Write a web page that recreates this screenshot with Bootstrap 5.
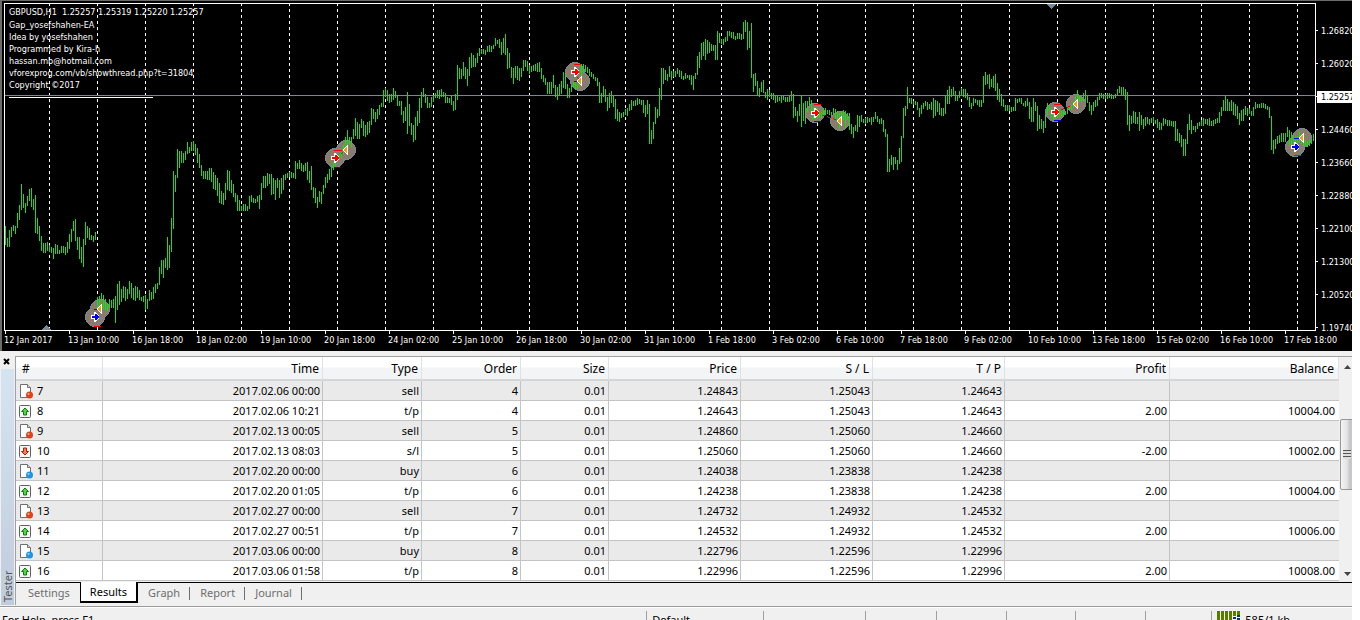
<!DOCTYPE html>
<html lang="en">
<head>
<meta charset="utf-8">
<meta name="viewport" content="width=device-width, initial-scale=1">
<title>Strategy Tester</title>
<link href="https://cdn.jsdelivr.net/npm/bootstrap@5.3.0/dist/css/bootstrap.min.css" rel="stylesheet">
<style>
  body { font-family: "Noto Sans", "Open Sans", sans-serif; font-size: 11px; line-height: 20px; color: #000; background: #fff; }
  .terminal { margin-right: 8px; min-height: 100vh; background: #f0f0f0; }

  .chart-pane { background: #000; border-left: 2px solid #6b6b68; border-top: 1px solid #6b6b68; padding: 2px 0 5px 2px; color: #fff; font-family: "DejaVu Sans Condensed", "Noto Sans", sans-serif; font-size: 9px; line-height: 12px; }
  .plot-area { border: 1px solid #fff; height: 328px; }
  .plot-area svg { display: block; width: 100%; height: 326px; }
  .chart-note { top: 2px; left: 4px; white-space: pre; }
  .chart-note .symbol-line { margin-bottom: 1px; }
  .note-rule { width: 144px; border-top: 1px solid #fff; margin-top: 6px; }
  .price-axis { width: 36px; height: 328px; padding-top: 11px; }
  .price-tick { height: 33px; white-space: nowrap; }
  .price-tick::before { content: ""; width: 2px; height: 1px; background: #fff; margin-right: 3px; flex: none; }
  .price-tick.current span { background: #fff; color: #000; margin-left: -4px; padding: 0 0 0 4px; }
  .time-axis { display: grid; grid-template-columns: repeat(20, 64fr) 32fr; margin-right: 36px; }
  .time-axis span { white-space: nowrap; min-width: 0; }
  .time-axis span::before { content: ""; display: block; width: 1px; height: 3px; background: #fff; margin-left: 1px; }

  .tester { margin-top: 5px; }
  .dock-strip { width: 15px; }
  .dock-strip button { border: 0; background: none; width: 13px; height: 13px; padding: 2px 0 0 3px; line-height: 1; }
  .dock-strip svg { display: block; }
  .dock-title { writing-mode: vertical-rl; transform: rotate(180deg); width: 13px; margin-left: 1px; background: linear-gradient(0deg, #d6e4f2, #c0ccdb); color: #555; line-height: 13px; padding-top: 3px; }
  .grid-pane { border-left: 1px solid #a0a0a0; border-top: 1px solid #a0a0a0; min-width: 0; }
  .results { table-layout: fixed; width: 100%; border-collapse: separate; border-spacing: 0; background: #fff; }
  .results th { height: 24px; padding: 2px 3px 0; line-height: 20px; font-weight: 400; font-size: 12px; text-align: right; border-right: 1px solid #dfe1e4; border-bottom: 2px solid #d5d5d5; background: linear-gradient(#fff 45%, #f2f4f6 50%, #f2f4f6); }
  .results td { height: 20px; padding: 0 2px; line-height: 19px; text-align: right; border-right: 1px solid #c4c4c4; border-bottom: 1px solid #c4c4c4; white-space: nowrap; }
  .results tr > :first-child { text-align: left; }
  .results th:first-child { padding-left: 6px; }
  .results td:first-child { padding-left: 3px; }
  .results td:last-child { border-right: 0; padding-right: 4px; }
  .results th:last-child { padding-right: 4px; }
  .results tbody tr:nth-child(odd) td { background: #eaeaea; }
  .results td svg { width: 15px; height: 16px; margin: -2px 3px 0 0; }
  .scroll-rail { width: 13px; background: #f0f0f0; overflow: hidden; }
  .scroll-rail button { border: 0; background: none; padding: 0; width: 17px; height: 17px; line-height: 1; display: block; }
  .rail-space { height: 45px; }
  .scroll-thumb { width: 17px; height: 71px; margin-left: 1px; border: 1px solid #979797; border-radius: 2px; background: linear-gradient(90deg, #f4f4f4, #e3e3e3 40%, #c4c4c8 60%, #d6d6d8); }
  .scroll-thumb i { display: block; width: 8px; height: 9px; margin-left: 2px; background: repeating-linear-gradient(#555 0 1px, #ddd 1px 3px); }

  .tab-strip { border-top: 1px solid #000; margin-top: 1px; height: 23px; }
  .tab-strip button { border: 0; background: none; padding: 0 10px; color: #6e6e6e; line-height: 18px; height: 19px; position: relative; }
  .tab-strip button:first-child { padding-left: 12px; }
  .tab-strip button.current { background: #fff; color: #000; border: solid #000; border-width: 0 2px 2px 1px; margin-top: -1px; height: 21px; padding: 0 9px; }
  .tab-strip button.ruled::after { content: ""; position: absolute; right: 0; top: 4px; height: 13px; width: 1px; background: #6e6e6e; }

  .status-bar { border-top: 1px solid #9a9a9a; box-shadow: inset 0 1px #fff; margin-top: 1px; height: 14px; padding-top: 4px; overflow: hidden; line-height: 18px; }
  .status-bar > div { border-left: 1px solid #a0a0a0; height: 20px; flex: none; white-space: nowrap; padding-left: 5px; }
  .status-bar > .hint { border: 0; padding-left: 2px; }
  .w-hint { width: 47.8%; } .w-profile { width: 8.6%; } .w-a { width: 7.6%; } .w-b { width: 5.2%; } .w-c { width: 5.1%; } .w-d { width: 4.9%; }
</style>
</head>
<body>
<main class="terminal d-flex flex-column">
  <section class="chart-pane overflow-hidden" aria-label="GBPUSD chart">
    <div class="d-flex">
      <div class="plot-area flex-grow-1 position-relative">
        <svg viewBox="5 4 1310 326" preserveAspectRatio="none" shape-rendering="crispEdges" role="img" aria-label="Price bars">
          <defs>
            <g id="arrow-in">
              <path d="M-4-2h3v-3h1l4 4v2l-4 4h-1v-3h-3z" fill="#fff"/>
              <path d="M-3-1h3v-2h1l3 3-3 3h-1v-2h-3z" fill="currentColor"/>
            </g>
            <g id="arrow-out">
              <path d="M2-5v10h-1l-5-5 5-5z" fill="#fff"/>
              <path d="M1-4v8l-4-4z" fill="#daa520"/>
            </g>
          </defs>
          <path id="day-lines" stroke="#fff" stroke-dasharray="3 3" fill="none"/>
          <path d="M5 95.500H1315" stroke="#778899"/>
          <g id="halos" fill="#8b7b6b" stroke="#778899"></g>
          <path id="bars" stroke="#14e014" fill="none"/>
          <g stroke="#f00">
            <path d="M94 326.500h7M334 150.500h8M574 64.500h7M814 104.500h7M1054 104.500h7M1294 155.500h7"/>
            <path d="M336 158L346 150M575 72L579 80M816 113L840 121M1056 112L1075 104" stroke-dasharray="3 3"/>
          </g>
          <path d="M94 309.500h6M334 167.500h7M574 81.500h7M814 121.500h7M1054 120.500h7M1294 138.500h7" stroke="#00f"/>
          <g id="signals"></g>
          <path d="M41 330l5-5 5 5zM1046 4l5 5 5-5z" fill="#778899"/>
        </svg>
        <div class="chart-note position-absolute"><div class="symbol-line">GBPUSD,H1  1.25257 1.25319 1.25220 1.25257</div><div>Gap_yosefshahen-EA</div><div>Idea by yosefshahen</div><div>Programmed by Kira-h</div><div>hassan.mb@hotmail.com</div><div>vforexprog.com/vb/showthread.php?t=31804</div><div>Copyright ©2017</div><div class="note-rule"></div></div>
      </div>
      <div class="price-axis flex-shrink-0" id="price-axis"></div>
    </div>
    <div class="time-axis" id="time-axis"></div>
  </section>

  <section class="tester d-flex" aria-label="Tester">
    <div class="dock-strip d-flex flex-column flex-shrink-0">
      <button type="button" class="d-flex" aria-label="Close"><svg width="7" height="7" viewBox="0 0 7 7"><path d="M1 1l5 5M6 1L1 6" stroke="#000" stroke-width="2"/></svg></button>
      <div class="dock-title flex-grow-1">Tester</div>
    </div>
    <div class="grid-pane flex-grow-1">
      <div class="d-flex">
        <table class="results">
          <colgroup><col style="width:87px"><col style="width:220px"><col style="width:99px"><col style="width:99px"><col style="width:88px"><col style="width:132px"><col style="width:132px"><col style="width:132px"><col style="width:165px"><col style="width:169px"></colgroup>
          <thead><tr><th>#</th><th>Time</th><th>Type</th><th>Order</th><th>Size</th><th>Price</th><th>S / L</th><th>T / P</th><th>Profit</th><th>Balance</th></tr></thead>
          <tbody id="rows"></tbody>
        </table>
        <div class="scroll-rail flex-shrink-0 d-flex flex-column">
          <button type="button" aria-label="Scroll up"><svg width="7" height="4" viewBox="0 0 7 4"><path d="M0 4l3.500-4L7 4z" fill="#444"/></svg></button>
          <div class="rail-space"></div>
          <div class="scroll-thumb d-flex align-items-center flex-shrink-0"><i></i></div>
          <button type="button" class="mt-auto" aria-label="Scroll down"><svg width="7" height="4" viewBox="0 0 7 4"><path d="M0 0l3.500 4L7 0z" fill="#444"/></svg></button>
        </div>
      </div>
      <nav class="tab-strip d-flex">
        <button type="button">Settings</button><button type="button" class="current">Results</button><button type="button" class="ruled">Graph</button><button type="button" class="ruled">Report</button><button type="button" class="ruled">Journal</button>
      </nav>
    </div>
  </section>

  <footer class="status-bar d-flex">
    <div class="hint w-hint">For Help, press F1</div>
    <div class="w-profile">Default</div>
    <div class="w-a"></div><div class="w-b"></div><div class="w-b"></div><div class="w-c"></div><div class="w-b"></div><div class="w-d"></div>
    <div class="d-flex"><svg width="24" height="14" viewBox="0 0 24 14" shape-rendering="crispEdges"><path d="M1 0v14M5 0v14M9 0v14M13 0v14M17 0v5M21 0v5" stroke="#5a7a00" stroke-width="3"/><path d="M17 6v8M21 4v10" stroke="#0a3a5a" stroke-width="3" stroke-dasharray="2 1"/></svg><span class="ms-1">585/1 kb</span></div>
  </footer>
</main>

<script src="https://cdn.jsdelivr.net/npm/bootstrap@5.3.0/dist/js/bootstrap.bundle.min.js"></script>
<script>
  // High,low of every hourly bar; bars are two units apart.
  const bars = `226,245 238,247 230,247 227,237 225,231 226,234 213,228 205,220 184,210 194,208 203,213 196,206 189,201 188,207 199,210 195,233 218,234 226,241 236,251 243,253 243,253 242,251 245,252 247,253 248,259 244,254 245,254 250,254 246,253 246,253 247,255 242,253 234,249 229,242 221,231 219,241 237,250 237,259 247,263 239,267 222,245 226,238 228,240 235,240 236,242 232,240
297,309 296,307 293,301 295,309 299,310 303,311 299,308 300,308 299,308 296,323 284,310 281,305 289,302 286,298 287,301 289,299 281,294 283,298 288,300 286,301 287,298 290,300 297,301 296,302 295,310 299,309 290,301 292,300 287,299 284,293 283,289 267,285 260,274 260,278 258,268 237,270 245,268 218,252 171,229 175,192
149,178 151,168 151,163 153,163 151,160 142,154 147,153 142,151 141,151 144,155 148,163 154,168 165,176 171,179 171,179 171,180 168,180 168,182 172,189 175,190 178,196 183,203 191,204 193,205 183,200 170,190 171,191 180,193 184,197 193,202 195,211 200,211 206,211 204,211 204,211 206,211 196,209 195,202 198,203 199,203 196,202 195,209 183,200 176,188 176,188 173,186 174,184 174,195 178,194 180,200 178,188 180,198 178,194 175,190 174,180 173,178 172,177 172,178 173,178
161,179 163,169 160,169 163,171 165,172 163,171 162,180 171,183 166,190 187,198 188,203 197,208 191,202 192,204 185,194 177,188 174,183 169,180 165,177 162,170 160,167 157,162 154,160 152,158 145,154 137,150 130,145 137,144 137,147 129,139 118,136 122,139 124,139 119,128 121,136 125,137 122,135 121,133 108,125 109,119 112,122 109,119 105,115 103,107
90,107 88,97 90,101 94,103 94,102 88,100 91,98 95,106 101,106 101,115 111,123 107,121 92,134 104,126 123,135 125,142 117,140 111,126 98,123 92,108 88,97 94,103 97,108 103,108 97,107 95,102 93,98 90,98 90,99 89,97 92,97 93,103 97,103 98,103 96,105 101,111 94,110 65,100 68,79 69,79 62,76 67,79 69,86 57,76 53,68 55,67 58,67 53,63 48,56 49,54 49,54 50,55 46,52 45,52 46,52 45,49 38,46 40,44 39,48 42,55 38,53 34,55 48,69 53,68
67,78 68,84 66,78 66,80 68,81 68,77 60,71 60,67 61,71 65,74 66,72 65,71 64,71 63,72 62,72 68,79 75,82 78,85 82,94 82,94 82,94 75,88 85,97 87,100 84,96 81,94 72,88 73,89 84,98 88,98 85,92 82,87 82,89 84,89 82,87 64,83 64,73 65,72 67,73 69,76 72,77 74,79 77,81 78,86 82,103 93,103 86,97 89,102 97,111 93,108 91,103 96,107 99,119 109,121 112,122 113,118 112,117 109,115 108,116 104,111 100,110 101,106 100,106 98,105 99,104 100,105 100,113 105,117 100,114 104,144 130,144 122,139 107,124 109,118 88,116 68,100
68,84 70,80 74,81 66,77 71,80 71,77 71,77 68,74 70,77 71,79 76,80 73,79 75,78 75,80 75,85 76,90 73,79 56,75 52,68 43,60 42,56 39,60 40,54 42,53 44,51 45,51 45,60 31,60 33,43 39,44 39,45 37,42 31,41 31,36 32,38 32,39 36,40 33,39 33,39 34,40 22,39 20,32 22,50 31,48 23,78 74,92 73,86 81,96 88,97 82,92 80,93 92,98 89,100 90,97 93,99 93,100 96,103 96,102 97,101 96,103 96,100 97,102 97,102 96,102 91,101 94,118 107,116 111,122 104,116 95,127 103,121 101,124 101,112 97,105
100,113 107,119 110,119 108,118 112,118 112,118 108,116 108,115 110,114 110,115 112,116 108,115 109,119 111,120 113,129 112,125 110,120 111,127 113,120 113,130 124,134 127,138 125,131 115,132 116,127 115,122 119,123 118,124 117,123 118,122 117,125 117,122 112,119 116,122 119,124 118,124 120,132 129,137 134,172 159,172 155,165 157,170 157,164 160,170 148,164 136,162 108,138 106,116 87,109 98,103 98,104 101,105 101,105 102,110 108,117 105,114 103,109 101,106 102,110 104,109 102,110 98,118 100,116 101,112 103,115 108,116 108,116 96,114 90,104 86,104 89,97 87,96 91,101 96,101 91,98 88,95 89,97 89,98 93,100 97,107 103,109 98,106 99,103 100,105 100,107 100,107 76,103 72,85 75,84 74,89 79,87 76,88 74,91 83,100 89,102 94,106
99,107 105,111 105,111 105,111 107,112 107,111 98,111 99,103 98,102 98,104 103,106 101,107 98,106 102,119 107,122 98,122 102,111 106,131 115,129 119,129 121,133 115,128 103,115 105,111 108,117 112,120 112,119 112,118 110,117 111,117 110,116 111,115 107,114 106,110 105,110 102,108 97,106 90,105 96,102 97,102 93,101 90,101 96,103 102,111 105,115 102,111 100,107 97,106 93,100 93,98 94,99 94,99 93,99 93,98 94,99 96,99 94,98 89,95 86,93 87,95 87,95 89,100 92,125 115,131 116,124 111,123 112,124 117,124 112,131 115,125 119,129 117,126 117,124 119,125 118,123 117,123 120,124 119,128 122,130 123,130 118,126 119,124 120,126 120,126 121,126 121,127 121,141 129,141 133,143 135,147 139,156 139,156 124,144 114,130 120,134 126,130 126,132 123,129 122,126 120,126 118,126 119,124 119,125 118,126 121,126 120,126 119,124 118,123 112,123 107,116 100,111 96,111 99,111 102,111 100,111 102,115 104,116 106,119 113,125 110,121 109,121 106,115 108,116 108,114 111,116 107,116 102,109 104,108 104,108 103,108 103,108 104,109 106,110 107,118 116,150 140,154 139,149 136,144 135,143 133,142 133,142 133,142 127,137 130,145 132,145 134,144 137,145 136,144 131,142 134,144 134,146 140,146 141,147 140,146 139,144 134,141`;
  document.getElementById('bars').setAttribute('d', bars.trim().split(/\s+/).map((b, i) => {
    const [hi, lo] = b.split(',');
    return `M${5.5 + 2 * i} ${hi}V${lo}`;
  }).join(''));

  let days = '';
  for (let x = 49.5; x < 1315; x += 48) days += `M${x} 3V330`;
  document.getElementById('day-lines').setAttribute('d', days);

  // Entry and exit point of each trade with the entry colour.
  const trades = [[95,317,100,309,'#00f'],[335,158,346,150,'#f00'],[575,72,580,81,'#f00'],[815,113,840,121,'#f00'],[1055,112,1076,104,'#f00'],[1295,147,1302,138,'#00f']];
  document.getElementById('halos').innerHTML = trades.map(([a, b, c, d]) =>
    `<circle cx="${a}" cy="${b}" r="9.5"/><circle cx="${c}" cy="${d}" r="9.5"/>`).join('');
  document.getElementById('signals').innerHTML = trades.map(([a, b, c, d, k]) =>
    `<use href="#arrow-out" x="${c}" y="${d}"/><use href="#arrow-in" x="${a}" y="${b}" color="${k}"/>`).join('');

  document.getElementById('price-axis').innerHTML =
    ['1.26820','1.26020','1.25257','1.24460','1.23660','1.22880','1.22100','1.21300','1.20520','1.19740']
    .map(p => `<div class="price-tick d-flex align-items-center${p === '1.25257' ? ' current' : ''}"><span>${p}</span></div>`).join('');

  document.getElementById('time-axis').innerHTML =
    ['12 Jan 2017','13 Jan 10:00','16 Jan 18:00','18 Jan 02:00','19 Jan 10:00','20 Jan 18:00','24 Jan 02:00','25 Jan 10:00','26 Jan 18:00','30 Jan 02:00','31 Jan 10:00','1 Feb 18:00','3 Feb 02:00','6 Feb 10:00','7 Feb 18:00','9 Feb 02:00','10 Feb 10:00','13 Feb 18:00','15 Feb 02:00','16 Feb 10:00','17 Feb 18:00']
    .map(t => `<span>${t}</span>`).join('');

  const page = c => `<svg viewBox="0 0 15 16" aria-hidden="true"><path d="M1.500 1.500h7l3 3v10h-10z" fill="#fff" stroke="#707070"/><path d="M8.500 1.500v3h3" fill="#ddd" stroke="#707070"/><circle cx="10.500" cy="12" r="3.500" fill="${c}"/><circle cx="9.500" cy="11" r="1" fill="#fff" opacity=".6"/></svg>`;
  const box = (c, e, d) => `<svg viewBox="0 0 15 16" aria-hidden="true"><rect x="0.500" y="2.500" width="11" height="12" rx="1" fill="#f6f6f6" stroke="#606060"/><path d="${d}" fill="${c}" stroke="${e}"/></svg>`;
  const icons = {
    sell: page('#d8441c'), buy: page('#2492dc'),
    't/p': box('#5fd04a', '#0a7a0a', 'M6 5l3.500 3.500h-2v3.500h-3v-3.500h-2z'),
    's/l': box('#f08060', '#b02000', 'M6 12l3.500-3.500h-2v-3.500h-3v3.500h-2z')
  };
  const deals = [
    [7,'2017.02.06 00:00','sell',4,'0.01','1.24843','1.25043','1.24643','',''],
    [8,'2017.02.06 10:21','t/p',4,'0.01','1.24643','1.25043','1.24643','2.00','10004.00'],
    [9,'2017.02.13 00:05','sell',5,'0.01','1.24860','1.25060','1.24660','',''],
    [10,'2017.02.13 08:03','s/l',5,'0.01','1.25060','1.25060','1.24660','-2.00','10002.00'],
    [11,'2017.02.20 00:00','buy',6,'0.01','1.24038','1.23838','1.24238','',''],
    [12,'2017.02.20 01:05','t/p',6,'0.01','1.24238','1.23838','1.24238','2.00','10004.00'],
    [13,'2017.02.27 00:00','sell',7,'0.01','1.24732','1.24932','1.24532','',''],
    [14,'2017.02.27 00:51','t/p',7,'0.01','1.24532','1.24932','1.24532','2.00','10006.00'],
    [15,'2017.03.06 00:00','buy',8,'0.01','1.22796','1.22596','1.22996','',''],
    [16,'2017.03.06 01:58','t/p',8,'0.01','1.22996','1.22596','1.22996','2.00','10008.00']
  ];
  document.getElementById('rows').innerHTML = deals.map(r =>
    '<tr>' + r.map((v, i) => `<td>${i === 0 ? icons[r[2]] : ''}${v}</td>`).join('') + '</tr>').join('');
</script>
</body>
</html>
